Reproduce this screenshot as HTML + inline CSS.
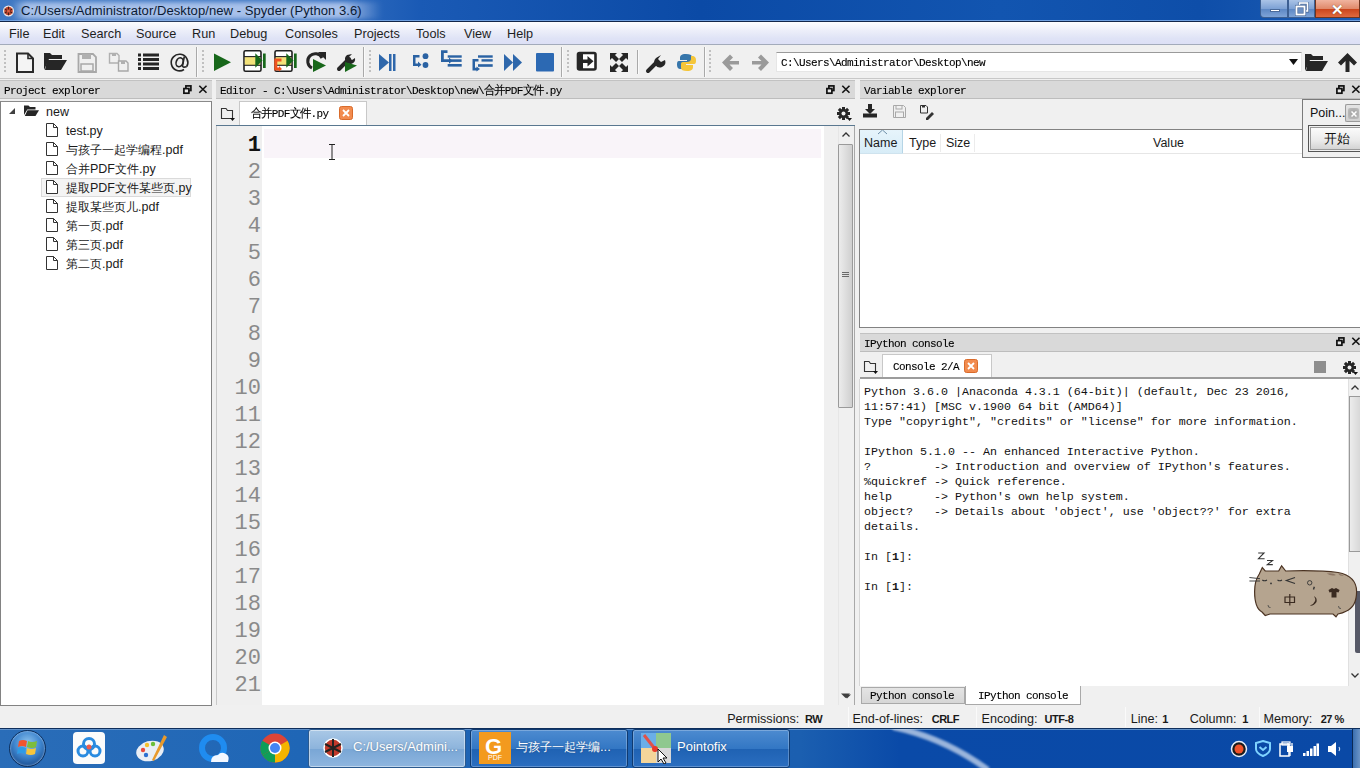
<!DOCTYPE html>
<html><head><meta charset="utf-8">
<style>
*{margin:0;padding:0;box-sizing:border-box}
html,body{line-height:1.15;width:1360px;height:768px;overflow:hidden;background:#f0f0f0;font-family:"Liberation Sans",sans-serif;color:#000}
.a{position:absolute}
.mono{font-family:"Liberation Mono",monospace}
#title{left:0;top:0;width:1360px;height:22px;background:linear-gradient(90deg,#3f78c3 0px,#3a74c2 300px,#1a5ab5 420px,#0b4aa6 700px,#1255b0 1000px,#0e4ea9 1200px,#1d5db4 1360px);border-bottom:1px solid #12264a;box-shadow:inset 0 -1px 0 #6fa0e0}
#title .t{left:21px;top:3px;font-size:13.05px;color:#0b1a33;white-space:nowrap;letter-spacing:0.05px}
#menubar{left:0;top:22px;width:1360px;height:23px;background:linear-gradient(#fdfdfe,#eef0fa 35%,#dfe3f6 75%,#dde0f6);border-bottom:1px solid #a3abbb}
.menu{top:5px;font-size:12.7px;color:#1e1e1e;white-space:nowrap}
#toolbar{left:0;top:45px;width:1360px;height:34px;background:#f0f0f0;border-bottom:1px solid #c8c8c8}
.sep{top:47px;width:2px;height:30px;background:#a9a9a9;border-right:1px solid #fafafa}
.dots{top:50px;width:2px;height:24px;background:repeating-linear-gradient(#c0c0c0 0 2px,transparent 2px 4px)}
.dh{height:19px;background:#d9d9d9;border-top:1px solid #c2c2c2;border-bottom:1px solid #bdbdbd}
.dh .t{left:4px;top:4px;font-family:"Liberation Mono",monospace;font-size:11px;letter-spacing:-0.6px;transform:scaleY(1.05);transform-origin:0 0;color:#111;white-space:nowrap;-webkit-text-stroke:0.12px #000;color:#000}
.sm{font-family:"Liberation Mono",monospace;font-size:11px;letter-spacing:-0.6px;transform:scaleY(1.05);transform-origin:0 0;color:#111;white-space:nowrap;-webkit-text-stroke:0.12px #000;color:#000}

.tr{font-size:12.5px;color:#1a1a1a;white-space:nowrap}
.ln{margin-top:1px;left:216px;width:45px;text-align:right;font-family:"Liberation Mono",monospace;font-size:22px;color:#8a8a8a;line-height:27px;height:27px}
.cl{margin-top:2px;left:864px;font-family:"Liberation Mono",monospace;font-size:11.67px;color:#111;white-space:pre;line-height:15px}
.vh{top:136px;font-size:12.5px;color:#1a1a1a;white-space:nowrap}
.sb{top:711.5px;font-size:12.6px;color:#1a1a1a;white-space:nowrap}
.sbv{top:712.5px;font-size:11px;font-weight:bold;color:#1a1a1a;white-space:nowrap;letter-spacing:-0.5px}

.tk{top:740px;font-size:13px;color:#fff;white-space:nowrap;text-shadow:0 0 2px rgba(0,0,0,.3)}
</style></head><body>
<!-- title bar -->
<div id="title" class="a">
 <div class="a" style="left:12px;top:2px;width:370px;height:17px;background:linear-gradient(90deg,rgba(185,205,240,.0) 0,rgba(185,205,240,.85) 14px,rgba(190,208,242,.85) 330px,rgba(185,205,240,0) 370px);filter:blur(2.5px)"></div>
 <svg class="a" style="left:2px;top:5px" width="13" height="12" viewBox="0 0 13 12"><circle cx="6.5" cy="6" r="5.5" fill="#f4ece8"/><circle cx="6.5" cy="6" r="4.3" fill="#b8402a"/><path d="M6.5 1.7 V10.3 M2.5 4 L10.5 8 M2.5 8 L10.5 4" stroke="#3a1a10" stroke-width="0.9"/><circle cx="6.5" cy="6" r="1.6" fill="#e06040"/></svg>
 <div class="a t">C:/Users/Administrator/Desktop/new - Spyder (Python 3.6)</div>
 <div class="a" style="left:1260px;top:0;width:28px;height:18px;background:linear-gradient(#aac3e6,#7ea2d5 50%,#5b86c3 51%,#7fa4d8);border:1px solid #3c5f92;border-top:none;border-radius:0 0 0 4px"></div>
 <div class="a" style="left:1270px;top:9px;width:10px;height:3px;background:#fff;border:1px solid #4a6a9a"></div>
 <div class="a" style="left:1288px;top:0;width:27px;height:18px;background:linear-gradient(#aac3e6,#7ea2d5 50%,#5b86c3 51%,#7fa4d8);border:1px solid #3c5f92;border-top:none"></div>
 <svg class="a" style="left:1295px;top:2px" width="14" height="14" viewBox="0 0 14 14"><rect x="4.5" y="1" width="8" height="8" fill="none" stroke="#4a6a9a" stroke-width="3.2"/><rect x="4.5" y="1" width="8" height="8" fill="none" stroke="#fff" stroke-width="1.6"/><rect x="1.5" y="4.5" width="8" height="8" fill="#6d90c2" stroke="#4a6a9a" stroke-width="3.2"/><rect x="1.5" y="4.5" width="8" height="8" fill="none" stroke="#fff" stroke-width="1.8"/></svg>
 <div class="a" style="left:1315px;top:0;width:45px;height:18px;background:linear-gradient(#f0b49f,#e08a6b 50%,#c9431a 51%,#df6a3f);border:1px solid #6d3521;border-top:none"></div>
 <div class="a" style="left:1331px;top:1px;font-size:15px;font-weight:bold;color:#fff;text-shadow:0 0 1px #5a2a10">✕</div>
</div>
<!-- menubar -->
<div id="menubar" class="a">
 <div class="a menu" style="left:9px">File</div>
 <div class="a menu" style="left:43px">Edit</div>
 <div class="a menu" style="left:81px">Search</div>
 <div class="a menu" style="left:136px">Source</div>
 <div class="a menu" style="left:192px">Run</div>
 <div class="a menu" style="left:230px">Debug</div>
 <div class="a menu" style="left:285px">Consoles</div>
 <div class="a menu" style="left:354px">Projects</div>
 <div class="a menu" style="left:416px">Tools</div>
 <div class="a menu" style="left:464px">View</div>
 <div class="a menu" style="left:507px">Help</div>
</div>
<!-- toolbar -->
<div id="toolbar" class="a"></div>

<div class="a dots" style="left:4px"></div>
<div class="a dots" style="left:202px"></div>
<div class="a dots" style="left:369px"></div>
<div class="a dots" style="left:567px"></div>
<div class="a dots" style="left:709px"></div>
<div class="a sep" style="left:196px"></div>
<div class="a sep" style="left:363px"></div>
<div class="a sep" style="left:561px"></div>
<div class="a sep" style="left:637px;top:50px;height:24px"></div>
<div class="a sep" style="left:704px"></div>
<svg class="a" style="left:0;top:45px" width="1360" height="34" viewBox="0 45 1360 34">
 <!-- new file -->
 <path d="M17 53.5 H28 L33 58.5 V72 H17 Z" fill="#f4f4f4" stroke="#2a2a2a" stroke-width="2"/>
 <path d="M28 53.5 V58.5 H33" fill="none" stroke="#2a2a2a" stroke-width="1.6"/>
 <!-- open folder -->
 <path d="M44 53 H50 L52 55 H62 V59 H49 L44 70 Z" fill="#262626"/>
 <path d="M47 60 H67 L61 70 H45 Z" fill="#262626"/>
 <!-- save gray -->
 <path d="M78.5 54 H93 L96 57 V72 H78.5 Z" fill="none" stroke="#a8a8a8" stroke-width="1.8"/>
 <rect x="82" y="54" width="9" height="5" fill="#b0b0b0"/>
 <rect x="81" y="64" width="12" height="7" fill="none" stroke="#a8a8a8" stroke-width="1.5"/>
 <!-- save all -->
 <path d="M109.5 53.5 H117 L119 55.5 V63 H109.5 Z" fill="none" stroke="#b0b0b0" stroke-width="1.4"/>
 <path d="M118.5 61 H126 L128 63 V71 H118.5 Z" fill="#f0f0f0" stroke="#a8a8a8" stroke-width="1.4"/>
 <rect x="112" y="53" width="4" height="3" fill="#b0b0b0"/><rect x="121" y="61" width="4" height="3" fill="#b0b0b0"/>
 <!-- list -->
 <g fill="#262626"><rect x="138" y="53.5" width="3" height="3"/><rect x="143" y="53.5" width="16" height="3"/>
 <rect x="138" y="58" width="3" height="3"/><rect x="143" y="58" width="16" height="3"/>
 <rect x="138" y="62.5" width="3" height="3"/><rect x="143" y="62.5" width="16" height="3"/>
 <rect x="138" y="67" width="3" height="3"/><rect x="143" y="67" width="16" height="3"/></g>
 <path d="M186.8 66.5 A8.3 8.3 0 1 0 184 69.5" fill="none" stroke="#262626" stroke-width="1.6"/><ellipse cx="179.6" cy="62.3" rx="3.4" ry="4.6" transform="rotate(20 179.6 62.3)" fill="none" stroke="#262626" stroke-width="1.6"/><path d="M184.3 56.5 L182.5 66 Q182.8 68 186.8 66.5" fill="none" stroke="#262626" stroke-width="1.6"/>
 <!-- run -->
 <path d="M214 53.5 L231 62.2 L214 71 Z" fill="#17671a"/>
 <!-- run cell -->
 <rect x="244" y="50.8" width="17" height="20.5" rx="1.5" fill="#fff" stroke="#1f1f1f" stroke-width="1.6"/>
 <rect x="244.8" y="57" width="15.4" height="8" fill="#f3e27a"/>
 <line x1="244" y1="56.6" x2="261" y2="56.6" stroke="#1f1f1f" stroke-width="1.1"/><line x1="244" y1="65.3" x2="261" y2="65.3" stroke="#1f1f1f" stroke-width="1.1"/>
 <path d="M255.3 53.3 L262.5 60.5 L255.3 67.8 Z" fill="#17671a"/><rect x="263" y="53.5" width="2.7" height="14.5" fill="#17671a"/>
 <!-- run cell advance -->
 <rect x="275" y="50.8" width="17" height="20.5" rx="1.5" fill="#fff" stroke="#1f1f1f" stroke-width="1.6"/>
 <rect x="275.8" y="57" width="15.4" height="8" fill="#f3e27a"/>
 <line x1="275" y1="56.6" x2="292" y2="56.6" stroke="#1f1f1f" stroke-width="1.1"/><line x1="275" y1="65.3" x2="292" y2="65.3" stroke="#1f1f1f" stroke-width="1.1"/>
 <path d="M274.3 58.5 H281.5 V61.5 H277.3 V67.5 H279 V66 L282 69 L279 71.5 V70.5 H274.3 Z" fill="#f0521e"/>
 <path d="M286.3 53.3 L293.5 60.5 L286.3 67.8 Z" fill="#17671a"/><rect x="294" y="53.5" width="2.7" height="14.5" fill="#17671a"/>
 <!-- rerun -->
 <path d="M322 58 A7.5 7.5 0 1 0 312 68" fill="none" stroke="#262626" stroke-width="3"/>
 <path d="M318 52 L326 52 L326 60 Z" fill="#262626"/>
 <path d="M313 59 L326 65.5 L313 72 Z" fill="#17671a"/>
 <!-- run selection -->
 <path d="M339 69 L349 59" stroke="#262626" stroke-width="4" stroke-linecap="round"/>
 <path d="M347 55 A5 5 0 1 0 355 58 L352 60 L349 57 L352 54 Z" fill="#262626"/>
 <path d="M345 62 L357 65.5 L345 72 Z" fill="#17671a"/>
 <!-- debug -->
 <path d="M379 54 L389 62.5 L379 71 Z" fill="#2e67ab"/><rect x="389" y="54" width="2.5" height="17" fill="#2e67ab"/><rect x="393" y="54" width="2.5" height="17" fill="#2e67ab"/>
 <!-- step -->
 <g fill="#2a62a3"><path d="M413 55 H419.5 V57.5 H415.5 V63.5 H418 V61.5 L421.5 64.7 L418 67.5 V66 H413 Z"/><circle cx="425.5" cy="56.2" r="2.9"/><circle cx="425.5" cy="65" r="2.9"/></g>
 <!-- step into -->
 <g fill="#2a62a3"><path d="M441 50.3 H447.5 V53 H443.8 V59.3 H449 V57.5 L452.5 60.7 L449 63.8 V62 H441 Z"/><rect x="447.7" y="55.3" width="14" height="2.4"/><rect x="450.4" y="59.3" width="11.2" height="2.6"/><rect x="447.7" y="64" width="14" height="2.6"/></g>
 <!-- step return -->
 <g fill="#2a62a3"><rect x="478" y="55.3" width="14.7" height="2.4"/><rect x="481.5" y="59.2" width="11.2" height="2.4"/><rect x="478" y="64.2" width="14.7" height="2.6"/><path d="M472.5 59 H478.5 V61.5 H475 V67.8 H476.5 V66.5 L480 69 L476.5 71.5 V70.5 H472.5 Z"/></g>
 <!-- continue -->
 <g fill="#2e67ab"><path d="M504 54 L513 62.5 L504 71 Z"/><path d="M513 54 L522 62.5 L513 71 Z"/></g>
 <!-- stop -->
 <rect x="536" y="53" width="18" height="18.5" rx="1" fill="#2c69b3"/>
 <!-- maximize pane -->
 <rect x="578" y="53" width="17.5" height="16.5" rx="1.5" fill="#fff" stroke="#262626" stroke-width="2.6"/>
 <rect x="578" y="53" width="5" height="16.5" fill="#262626"/>
 <path d="M583 59.5 H587.5 V56 L593.5 61.2 L587.5 66.5 V63 H583 Z" fill="#262626"/>
 <!-- fullscreen -->
 <g fill="#262626"><path d="M610 53 H617 L615 55 L619 59 L616 62 L612 58 L610 60 Z"/><path d="M628 53 H621 L623 55 L619 59 L622 62 L626 58 L628 60 Z"/><path d="M610 72 H617 L615 70 L619 66 L616 63 L612 67 L610 65 Z"/><path d="M628 72 H621 L623 70 L619 66 L622 63 L626 67 L628 65 Z"/></g>
 <!-- wrench -->
 <path d="M648 71 L657 62" stroke="#262626" stroke-width="4" stroke-linecap="round"/>
 <path d="M656 58 A5.5 5.5 0 1 0 665 60 L661 62 L658 59 L661 55 Z" fill="#262626"/>
 <!-- python -->
 <path d="M686 54 C681 54 680 56 680 58 V60 H687 V61 H679 C677 61 677 63 677 65 C677 68 679 69 680 69 H682 V66 C682 64 684 63 686 63 H690 C692 63 692 62 692 60 V57 C692 55 690 54 686 54 Z" fill="#3776ab"/>
 <path d="M687 71 C692 71 693 69 693 67 V65 H686 V64 H694 C696 64 696 62 696 60 C696 57 694 56 693 56 H691 V59 C691 61 689 62 687 62 H683 C681 62 681 63 681 65 V68 C681 70 683 71 687 71 Z" fill="#f5c63a"/>
 <!-- back / forward -->
 <path d="M722 62.5 L730 54.5 L733 57.5 L729.5 61 H739 V64.5 H729.5 L733 68 L730 71 Z" fill="#9a9a9a"/>
 <path d="M769 62.5 L761 54.5 L758 57.5 L761.5 61 H752 V64.5 H761.5 L758 68 L761 71 Z" fill="#9a9a9a"/>
 <!-- right folder -->
 <path d="M1305 54 H1311 L1313 56 H1323 V60 H1310 L1305 71 Z" fill="#262626"/>
 <path d="M1308 61 H1328 L1322 71 H1306 Z" fill="#262626"/>
 <!-- up arrow -->
 <path d="M1347.5 53 L1357 62.5 L1354 65.5 L1349.5 61 V72 H1345.5 V61 L1341 65.5 L1338 62.5 Z" fill="#262626"/>
</svg>
<div class="a" style="left:776px;top:52px;width:526px;height:20px;background:#fff;border:1px solid #e6e6e6;border-top:1.5px solid #9a9a9a"></div>
<div class="a sm" style="left:781px;top:57px">C:\Users\Administrator\Desktop\new</div>
<svg class="a" style="left:1289px;top:59px" width="10" height="6"><path d="M0 0 H9 L4.5 6 Z" fill="#111"/></svg>


<!-- ===== Project explorer ===== -->
<div class="a dh" style="left:0;top:80px;width:212px"><div class="a t">Project explorer</div></div>
<svg class="a" style="left:183px;top:85px" width="26" height="10" viewBox="0 0 26 10">
 <rect x="2.9" y="0.9" width="5" height="4.6" fill="none" stroke="#111" stroke-width="1.7"/>
 <rect x="0.9" y="3.6" width="5" height="4.6" fill="#e8e8e8" stroke="#111" stroke-width="1.7"/>
 <path d="M16.3 0.8 L23.5 7.8 M23.5 0.8 L16.3 7.8" stroke="#111" stroke-width="1.6"/>
</svg>
<div class="a" style="left:0;top:101px;width:212px;height:605px;background:#fff;border:1px solid #828282;border-top:1px solid #8a8a8a"></div>
<svg class="a" style="left:9px;top:108px" width="7" height="7"><path d="M6 0 V6 H0 Z" fill="#404040"/></svg>
<svg class="a" style="left:24px;top:105px" width="15" height="11" viewBox="0 0 15 11"><path d="M0 0.5 H4.5 L6 2 H11.5 V4.5 H3.3 L0 10 Z" fill="#262626"/><path d="M3.5 5.2 H15 L11.5 11 H0.8 Z" fill="#262626"/></svg>
<div class="a tr" style="left:46px;top:104.5px">new</div>
<div class="a" style="left:41px;top:178px;width:150px;height:19px;background:#f4f4f4;border:1px solid #dadada"></div>
<svg class="a" style="left:45px;top:123px" width="14" height="14" viewBox="0 0 14 14"><path d="M1.5 0.5 H8.5 L12.5 4.5 V13.5 H1.5 Z" fill="#fff" stroke="#333" stroke-width="1"/><path d="M8.5 0.5 V4.5 H12.5" fill="none" stroke="#333" stroke-width="1"/></svg><div class="a tr" style="left:66px;top:123.5px">test.py</div><svg class="a" style="left:45px;top:142px" width="14" height="14" viewBox="0 0 14 14"><path d="M1.5 0.5 H8.5 L12.5 4.5 V13.5 H1.5 Z" fill="#fff" stroke="#333" stroke-width="1"/><path d="M8.5 0.5 V4.5 H12.5" fill="none" stroke="#333" stroke-width="1"/></svg><div class="a tr" style="left:66px;top:142.5px"><span style="font-size:12px">与孩子一起学编程</span>.pdf</div><svg class="a" style="left:45px;top:161px" width="14" height="14" viewBox="0 0 14 14"><path d="M1.5 0.5 H8.5 L12.5 4.5 V13.5 H1.5 Z" fill="#fff" stroke="#333" stroke-width="1"/><path d="M8.5 0.5 V4.5 H12.5" fill="none" stroke="#333" stroke-width="1"/></svg><div class="a tr" style="left:66px;top:161.5px"><span style="font-size:12px">合并</span>PDF<span style="font-size:12px">文件</span>.py</div><svg class="a" style="left:45px;top:180px" width="14" height="14" viewBox="0 0 14 14"><path d="M1.5 0.5 H8.5 L12.5 4.5 V13.5 H1.5 Z" fill="#fff" stroke="#333" stroke-width="1"/><path d="M8.5 0.5 V4.5 H12.5" fill="none" stroke="#333" stroke-width="1"/></svg><div class="a tr" style="left:66px;top:180.5px"><span style="font-size:12px">提取</span>PDF<span style="font-size:12px">文件某些页</span>.py</div><svg class="a" style="left:45px;top:199px" width="14" height="14" viewBox="0 0 14 14"><path d="M1.5 0.5 H8.5 L12.5 4.5 V13.5 H1.5 Z" fill="#fff" stroke="#333" stroke-width="1"/><path d="M8.5 0.5 V4.5 H12.5" fill="none" stroke="#333" stroke-width="1"/></svg><div class="a tr" style="left:66px;top:199.5px"><span style="font-size:12px">提取某些页儿</span>.pdf</div><svg class="a" style="left:45px;top:218px" width="14" height="14" viewBox="0 0 14 14"><path d="M1.5 0.5 H8.5 L12.5 4.5 V13.5 H1.5 Z" fill="#fff" stroke="#333" stroke-width="1"/><path d="M8.5 0.5 V4.5 H12.5" fill="none" stroke="#333" stroke-width="1"/></svg><div class="a tr" style="left:66px;top:218.5px"><span style="font-size:12px">第一页</span>.pdf</div><svg class="a" style="left:45px;top:237px" width="14" height="14" viewBox="0 0 14 14"><path d="M1.5 0.5 H8.5 L12.5 4.5 V13.5 H1.5 Z" fill="#fff" stroke="#333" stroke-width="1"/><path d="M8.5 0.5 V4.5 H12.5" fill="none" stroke="#333" stroke-width="1"/></svg><div class="a tr" style="left:66px;top:237.5px"><span style="font-size:12px">第三页</span>.pdf</div><svg class="a" style="left:45px;top:256px" width="14" height="14" viewBox="0 0 14 14"><path d="M1.5 0.5 H8.5 L12.5 4.5 V13.5 H1.5 Z" fill="#fff" stroke="#333" stroke-width="1"/><path d="M8.5 0.5 V4.5 H12.5" fill="none" stroke="#333" stroke-width="1"/></svg><div class="a tr" style="left:66px;top:256.5px"><span style="font-size:12px">第二页</span>.pdf</div>

<!-- ===== Editor ===== -->
<div class="a dh" style="left:216px;top:80px;width:639px"><div class="a t">Editor - C:\Users\Administrator\Desktop\new\合并PDF文件.py</div></div>
<svg class="a" style="left:826px;top:85px" width="26" height="10" viewBox="0 0 26 10">
 <rect x="2.9" y="0.9" width="5" height="4.6" fill="none" stroke="#111" stroke-width="1.7"/>
 <rect x="0.9" y="3.6" width="5" height="4.6" fill="#e8e8e8" stroke="#111" stroke-width="1.7"/>
 <path d="M16.3 0.8 L23.5 7.8 M23.5 0.8 L16.3 7.8" stroke="#111" stroke-width="1.6"/>
</svg>
<svg class="a" style="left:220px;top:106px" width="16" height="16" viewBox="0 0 16 16"><path d="M1.5 2.5 H6 L7.5 4.5 H12.5 V12.5 H1.5 Z" fill="none" stroke="#333" stroke-width="1.1"/><path d="M10 12 H15 L12.5 15 Z" fill="#111"/></svg>
<div class="a" style="left:239px;top:101px;width:128px;height:25px;background:#fff;border:1px solid #c8c8c8;border-bottom:none"></div>
<div class="a sm" style="left:251px;top:108px">合并PDF文件.py</div>
<svg class="a" style="left:339px;top:106px" width="14" height="14" viewBox="0 0 14 14"><rect x="0.5" y="0.5" width="13" height="13" rx="2" fill="#f28b4e" stroke="#d96b2b"/><path d="M4 4 L10 10 M10 4 L4 10" stroke="#fff" stroke-width="1.8"/></svg>
<svg class="a" style="left:837px;top:107px" width="15" height="14" viewBox="0 0 15 14">
 <g fill="#262626"><circle cx="6.5" cy="6.5" r="4.5"/>
 <rect x="5" y="0" width="3" height="13"/><rect x="0" y="5" width="13" height="3"/>
 <rect x="5" y="0" width="3" height="13" transform="rotate(45 6.5 6.5)"/><rect x="5" y="0" width="3" height="13" transform="rotate(-45 6.5 6.5)"/></g>
 <circle cx="6.5" cy="6.5" r="2" fill="#f0f0f0"/>
 <path d="M10 11 H15 L12.5 14 Z" fill="#111"/>
</svg>
<div class="a" style="left:216px;top:124.5px;width:639px;height:1.5px;background:#5a7890"></div>
<div class="a" style="left:216px;top:126px;width:639px;height:579px;background:#fff;border-left:1px solid #c9c9c9"></div>
<div class="a" style="left:217px;top:126px;width:45px;height:579px;background:#efefef"></div>
<div class="a" style="left:264px;top:129px;width:557px;height:29px;background:#f9f4f9"></div>
<div class="a ln" style="top:131px;color:#111;font-weight:bold">1</div><div class="a ln" style="top:158px;">2</div><div class="a ln" style="top:185px;">3</div><div class="a ln" style="top:212px;">4</div><div class="a ln" style="top:239px;">5</div><div class="a ln" style="top:266px;">6</div><div class="a ln" style="top:293px;">7</div><div class="a ln" style="top:320px;">8</div><div class="a ln" style="top:347px;">9</div><div class="a ln" style="top:374px;">10</div><div class="a ln" style="top:401px;">11</div><div class="a ln" style="top:428px;">12</div><div class="a ln" style="top:455px;">13</div><div class="a ln" style="top:482px;">14</div><div class="a ln" style="top:509px;">15</div><div class="a ln" style="top:536px;">16</div><div class="a ln" style="top:563px;">17</div><div class="a ln" style="top:590px;">18</div><div class="a ln" style="top:617px;">19</div><div class="a ln" style="top:644px;">20</div><div class="a ln" style="top:671px;">21</div>
<!-- I-beam cursor -->
<svg class="a" style="left:328px;top:144px" width="8" height="16"><path d="M1 0.5 H7 M4 0.5 V15.5 M1 15.5 H7" stroke="#222" stroke-width="1"/></svg>
<!-- editor scrollbar -->
<div class="a" style="left:824px;top:126px;width:31px;height:579px;background:#f0f0f0;border-right:1px solid #a8a8a8"></div><div class="a" style="left:838px;top:126px;width:1px;height:579px;background:#e6e6e6"></div>
<svg class="a" style="left:842px;top:132px" width="8" height="5"><path d="M0.5 4.5 L4 1 L7.5 4.5" fill="none" stroke="#333" stroke-width="1.3"/></svg>
<div class="a" style="left:838px;top:144px;width:15px;height:264px;background:linear-gradient(90deg,#ececec,#dedede 50%,#cfcfcf);border:1px solid #9a9a9a;border-radius:1px"></div>
<div class="a" style="left:842px;top:272px;width:7px;height:6px;background:repeating-linear-gradient(#6a6a6a 0 1px,transparent 1px 2px)"></div>
<svg class="a" style="left:841px;top:693px" width="9" height="6"><path d="M0 0.5 L4.5 5 L9 0.5 Z" fill="#404040"/></svg>

<!-- ===== Variable explorer ===== -->
<div class="a dh" style="left:860px;top:80px;width:500px"><div class="a t">Variable explorer</div></div>
<svg class="a" style="left:1336px;top:85px" width="26" height="10" viewBox="0 0 26 10">
 <rect x="2.9" y="0.9" width="5" height="4.6" fill="none" stroke="#111" stroke-width="1.7"/>
 <rect x="0.9" y="3.6" width="5" height="4.6" fill="#e8e8e8" stroke="#111" stroke-width="1.7"/>
 <path d="M16.3 0.8 L23.5 7.8 M23.5 0.8 L16.3 7.8" stroke="#111" stroke-width="1.6"/>
</svg>
<svg class="a" style="left:863px;top:104px" width="14" height="14" viewBox="0 0 14 14"><path d="M5 0 H9 V5 H12 L7 10 L2 5 H5 Z" fill="#262626"/><rect x="0" y="9.5" width="14" height="4" fill="#262626"/></svg>
<svg class="a" style="left:893px;top:105px" width="13" height="13" viewBox="0 0 13 13"><path d="M0.5 0.5 H10.5 L12.5 2.5 V12.5 H0.5 Z" fill="none" stroke="#a8a8a8"/><rect x="3" y="0.5" width="6" height="3.5" fill="none" stroke="#a8a8a8"/><rect x="2.5" y="7" width="8" height="5.5" fill="none" stroke="#a8a8a8"/></svg>
<svg class="a" style="left:920px;top:105px" width="15" height="15" viewBox="0 0 15 15"><path d="M0.5 0.5 H6 L7.5 2 V8 H0.5 Z" fill="none" stroke="#333"/><rect x="2" y="0.5" width="3" height="2" fill="#333"/><path d="M6 13 L12 7 L14 9 L8 15 H6 Z" fill="#333"/></svg>
<div class="a" style="left:859px;top:129px;width:501px;height:199px;background:#fff;border:1px solid #828282;border-right:none"></div>
<div class="a" style="left:860px;top:130px;width:43px;height:24px;background:linear-gradient(#e6f4fb,#d7ecf7);border-right:1px solid #b6d5e6"></div>
<div class="a" style="left:903px;top:130px;width:457px;height:24px;background:#fff;border-bottom:1px solid #e6e6e6"></div>
<div class="a" style="left:860px;top:153px;width:43px;height:1px;background:#cfe3ee"></div>
<div class="a" style="left:940px;top:134px;width:1px;height:18px;background:#ececec"></div>
<div class="a" style="left:974px;top:134px;width:1px;height:18px;background:#ececec"></div>
<svg class="a" style="left:878px;top:130px" width="9" height="5"><path d="M0 4 L4.5 0 L9 4" fill="none" stroke="#6f8fa8"/></svg>
<div class="a vh" style="left:864px">Name</div>
<div class="a vh" style="left:909px">Type</div>
<div class="a vh" style="left:946px">Size</div>
<div class="a vh" style="left:1153px">Value</div>
<!-- Pointofix widget -->
<div class="a" style="left:1302px;top:99px;width:58px;height:59px;background:#f0f0f0;border:1px solid #7a7a7a;border-right:none"></div>
<div class="a" style="left:1310px;top:106px;font-size:12.5px;color:#111;white-space:nowrap">Poin...</div>
<div class="a" style="left:1345px;top:104px;width:15px;height:18px;background:linear-gradient(#e4e4e4,#d0d0d0);border:1px solid #9a9a9a;border-right:none;border-radius:2px 0 0 2px"></div>
<div class="a" style="left:1348px;top:108px;width:11px;height:11px;border-radius:2px;background:radial-gradient(#a0a0a0,#c0c0c0)"></div><svg class="a" style="left:1351px;top:111px" width="6" height="6"><path d="M0.5 0.5 L5.5 5.5 M5.5 0.5 L0.5 5.5" stroke="#fff" stroke-width="1.5"/></svg>
<div class="a" style="left:1308px;top:125px;width:52px;height:27px;border:1px solid #555;border-right:none;background:#f0f0f0"></div>
<div class="a" style="left:1310px;top:127px;width:50px;height:23px;background:linear-gradient(#fbfbfb,#eaeaea 60%,#d4d4d4);border:1px solid #9a9a9a;border-right:none"></div>
<div class="a" style="left:1324px;top:132px;font-size:13px;color:#111;white-space:nowrap">开始</div>

<!-- ===== IPython console ===== -->
<div class="a dh" style="left:860px;top:333px;width:500px"><div class="a t">IPython console</div></div>
<svg class="a" style="left:1336px;top:337px" width="26" height="10" viewBox="0 0 26 10">
 <rect x="2.9" y="0.9" width="5" height="4.6" fill="none" stroke="#111" stroke-width="1.7"/>
 <rect x="0.9" y="3.6" width="5" height="4.6" fill="#e8e8e8" stroke="#111" stroke-width="1.7"/>
 <path d="M16.3 0.8 L23.5 7.8 M23.5 0.8 L16.3 7.8" stroke="#111" stroke-width="1.6"/>
</svg>
<svg class="a" style="left:863px;top:359px" width="16" height="16" viewBox="0 0 16 16"><path d="M1.5 2.5 H6 L7.5 4.5 H12.5 V12.5 H1.5 Z" fill="none" stroke="#333" stroke-width="1.1"/><path d="M10 12 H15 L12.5 15 Z" fill="#111"/></svg>
<div class="a" style="left:882px;top:354px;width:110px;height:25px;background:#fff;border:1px solid #c8c8c8;border-bottom:none"></div>
<div class="a sm" style="left:893px;top:361px">Console 2/A</div>
<svg class="a" style="left:964px;top:359px" width="14" height="14" viewBox="0 0 14 14"><rect x="0.5" y="0.5" width="13" height="13" rx="2" fill="#f28b4e" stroke="#d96b2b"/><path d="M4 4 L10 10 M10 4 L4 10" stroke="#fff" stroke-width="1.8"/></svg>
<div class="a" style="left:1314px;top:361px;width:12px;height:12px;background:#8e8e8e"></div>
<svg class="a" style="left:1343px;top:361px" width="15" height="14" viewBox="0 0 15 14">
 <g fill="#262626"><circle cx="6.5" cy="6.5" r="4.5"/>
 <rect x="5" y="0" width="3" height="13"/><rect x="0" y="5" width="13" height="3"/>
 <rect x="5" y="0" width="3" height="13" transform="rotate(45 6.5 6.5)"/><rect x="5" y="0" width="3" height="13" transform="rotate(-45 6.5 6.5)"/></g>
 <circle cx="6.5" cy="6.5" r="2" fill="#f0f0f0"/>
 <path d="M10 11 H15 L12.5 14 Z" fill="#111"/>
</svg>
<div class="a" style="left:860px;top:377px;width:500px;height:1.5px;background:#9c9c9c"></div>
<div class="a" style="left:859px;top:379px;width:501px;height:307px;background:#fff;border-left:1px solid #d6d6d6"></div>
<div class="a cl" style="top:383px">Python 3.6.0 |Anaconda 4.3.1 (64-bit)| (default, Dec 23 2016,</div><div class="a cl" style="top:398px">11:57:41) [MSC v.1900 64 bit (AMD64)]</div><div class="a cl" style="top:413px">Type &quot;copyright&quot;, &quot;credits&quot; or &quot;license&quot; for more information.</div><div class="a cl" style="top:428px"></div><div class="a cl" style="top:443px">IPython 5.1.0 -- An enhanced Interactive Python.</div><div class="a cl" style="top:458px">?         -&gt; Introduction and overview of IPython&#x27;s features.</div><div class="a cl" style="top:473px">%quickref -&gt; Quick reference.</div><div class="a cl" style="top:488px">help      -&gt; Python&#x27;s own help system.</div><div class="a cl" style="top:503px">object?   -&gt; Details about &#x27;object&#x27;, use &#x27;object??&#x27; for extra</div><div class="a cl" style="top:518px">details.</div><div class="a cl" style="top:533px"></div><div class="a cl" style="top:548px"><span style="color:#1a1a1a">In [</span><b style="color:#1a1a1a">1</b><span style="color:#1a1a1a">]: </span></div><div class="a cl" style="top:563px"></div><div class="a cl" style="top:578px"><span style="color:#1a1a1a">In [</span><b style="color:#1a1a1a">1</b><span style="color:#1a1a1a">]: </span></div>
<!-- console scrollbar -->
<div class="a" style="left:1348px;top:379px;width:12px;height:307px;background:#f0f0f0;border-left:1px solid #e0e0e0"></div>
<svg class="a" style="left:1351px;top:385px" width="8" height="5"><path d="M0.5 4.5 L4 1 L7.5 4.5" fill="none" stroke="#333" stroke-width="1.3"/></svg>
<div class="a" style="left:1349px;top:396px;width:11px;height:156px;background:linear-gradient(90deg,#ececec,#d8d8d8);border:1px solid #9a9a9a;border-right:none"></div>
<svg class="a" style="left:1351px;top:673px" width="8" height="5"><path d="M0.5 0.5 L4 4 L7.5 0.5" fill="none" stroke="#333" stroke-width="1.3"/></svg>

<!-- pusheen -->
<div class="a" style="left:1355px;top:591px;width:5px;height:62px;background:#565866;border-radius:2px 0 0 2px"></div>
<svg class="a" style="left:1248px;top:550px" width="112" height="68" viewBox="0 0 112 68">
 <path d="M6.6 41.6 C6.6 33 8.5 28 11.3 24 L14.3 17.5 L17.2 21 L30.7 21 L33.6 15.8 L37.7 21 C55 20.5 75 20.5 90 22.5 C103 25 108.6 32 108.6 41.6 C108.6 52 104 59 97.5 61.5 C95 63 91 63.8 90 64 L88 66.8 L85 64 L22 64 L17.2 65.5 L14 62 C10 60 6.6 53 6.6 41.6 Z" fill="#b5a48f" stroke="#4b3322" stroke-width="1.2"/>
 <path d="M78.7 23.5 Q85 22.5 88 25 Q83 26.5 78.7 23.5 Z M90 23.5 Q94 24 96 26 Q92 26.5 90 23.5 Z" fill="#8b7565"/>
 <path d="M10.2 3 H16 L10.5 8.7 H16.6 M19 10.5 H24.5 L19.3 14.6 H24.8" fill="none" stroke="#333" stroke-width="1.1"/>
 <path d="M1.4 27.5 L12 28.7 M1.4 31 H12" stroke="#333" stroke-width="0.9"/>
 <path d="M14.3 30 Q16.5 31.5 19 30 M29.5 30 Q31.7 31.5 34 30 M47 27.5 L38.3 30.4 L47 33.4" fill="none" stroke="#333" stroke-width="1.1"/>
 <circle cx="23" cy="33.4" r="0.9" fill="#333"/>
 <circle cx="61.7" cy="32.8" r="2.2" fill="none" stroke="#333" stroke-width="0.9"/>
 <path d="M66.3 36.8 L65.5 39.5" stroke="#333" stroke-width="1.4"/>
 <path d="M37 47 H46.5 V52.5 H37 Z M41.8 44 V55.6" fill="none" stroke="#3a2a20" stroke-width="1.2"/>
 <path d="M66 46 Q70 52 62 55.6 Q66 56 68.5 52 Q69.5 48 66 46 Z" fill="#3a2a20"/>
 <path d="M80.5 40 L84 38 L86 39 L88 38 L91.6 40 L90.5 42.5 L88.5 42 L88.5 47.4 L83.5 47.4 L83.5 42 L81.5 42.5 Z" fill="#3a2a20"/>
 <path d="M20 55 Q20 58 22.5 57.5 M90.5 56 Q90.5 59 93 58.5" fill="none" stroke="#444" stroke-width="0.8"/>
</svg>
<!-- bottom tabs -->
<div class="a" style="left:860px;top:686px;width:500px;height:19px;background:#f0f0f0"></div>
<div class="a" style="left:861px;top:687px;width:104px;height:17px;background:linear-gradient(#e4e4e4,#d6d6d6);border:1px solid #a9a9a9"></div>
<div class="a sm" style="left:870px;top:690px">Python console</div>
<div class="a" style="left:965px;top:686px;width:116px;height:19px;background:#fff;border:1px solid #a9a9a9;border-top:none"></div>
<div class="a sm" style="left:978px;top:690px">IPython console</div>
<svg class="a" style="left:843px;top:694px" width="8" height="5"><path d="M0 0.5 L4 4.5 L8 0.5 Z" fill="#404040"/></svg>

<!-- ===== Status bar ===== -->
<div class="a sb" style="left:727.2px">Permissions:</div><div class="a sbv" style="left:805px">RW</div>
<div class="a sb" style="left:852.4px">End-of-lines:</div><div class="a sbv" style="left:931.7px">CRLF</div>
<div class="a sb" style="left:981.5px">Encoding:</div><div class="a sbv" style="left:1044.6px">UTF-8</div>
<div class="a sb" style="left:1130.7px">Line:</div><div class="a sbv" style="left:1162.2px">1</div>
<div class="a sb" style="left:1189.7px">Column:</div><div class="a sbv" style="left:1242.3px">1</div>
<div class="a sb" style="left:1263.4px">Memory:</div><div class="a sbv" style="left:1320.7px">27 %</div>
<div class="a" style="left:848px;top:707px;width:1px;height:20px;background:#dadada;border-right:1px solid #fafafa"></div>
<div class="a" style="left:976px;top:707px;width:1px;height:20px;background:#dadada;border-right:1px solid #fafafa"></div>
<div class="a" style="left:1125px;top:707px;width:1px;height:20px;background:#dadada;border-right:1px solid #fafafa"></div>
<div class="a" style="left:1259px;top:707px;width:1px;height:20px;background:#dadada;border-right:1px solid #fafafa"></div>
<!-- ===== Taskbar ===== -->
<div class="a" style="left:0;top:728px;width:1360px;height:40px;background:linear-gradient(90deg,#2a6db8 0,#1f66b6 300px,#1b5fb0 800px,#0a4aa8 900px,#0a49a6 1360px);border-top:1px solid #0f2f5c"></div>
<div class="a" style="left:0;top:729px;width:1360px;height:1px;background:#5f90c9"></div>
<!-- swoosh -->
<svg class="a" style="left:860px;top:729px" width="160" height="39" viewBox="860 729 160 39"><path d="M893 727 Q945 738 988 770" fill="none" stroke="rgba(190,208,232,.8)" stroke-width="6" style="filter:blur(1px)"/></svg>
<!-- start orb -->
<div class="a" style="left:9px;top:730px;width:37px;height:37px;border-radius:50%;background:radial-gradient(circle at 50% 35%,#8fc4ee 0,#3f86cf 45%,#1b4f92 80%);border:1px solid #0d2f5c;box-shadow:inset 0 0 2px #cfe6ff"></div>
<svg class="a" style="left:17px;top:737px" width="22" height="22" viewBox="0 0 22 22">
 <path d="M2 4 Q6 2 10 4 L9 10 Q5 8 1 10 Z" fill="#f2542d"/>
 <path d="M11 4 Q15 6 20 4 L19 10 Q15 12 10 10 Z" fill="#7dbd3c"/>
 <path d="M1 11 Q5 9 9 11 L8 17 Q4 15 0 17 Z" fill="#2e9be6"/>
 <path d="M10 11 Q14 13 19 11 L18 17 Q14 19 9 17 Z" fill="#f7c53b"/>
</svg>
<!-- baidu -->
<div class="a" style="left:73px;top:732px;width:32px;height:32px;border-radius:4px;background:#fbfbfb"></div>
<svg class="a" style="left:75px;top:735px" width="28" height="26" viewBox="0 0 28 26">
 <circle cx="14" cy="9" r="5.5" fill="none" stroke="#2a8be0" stroke-width="3"/>
 <circle cx="8" cy="16" r="5" fill="none" stroke="#2a8be0" stroke-width="3"/>
 <circle cx="20" cy="16" r="5" fill="none" stroke="#2a8be0" stroke-width="3"/>
 <circle cx="14" cy="12" r="2.5" fill="#f05a4a"/>
</svg>
<!-- paint -->
<svg class="a" style="left:134px;top:733px" width="34" height="32" viewBox="0 0 34 32">
 <ellipse cx="16" cy="18" rx="14" ry="10" fill="#e9eef5" transform="rotate(-15 16 18)"/>
 <circle cx="9" cy="17" r="2.2" fill="#e94b3c"/><circle cx="13" cy="12" r="2.2" fill="#f4c12c"/><circle cx="19" cy="11" r="2.2" fill="#6bbf3a"/><circle cx="12" cy="22" r="2.2" fill="#2a6fd0"/>
 <path d="M30 2 L33 4 L20 28 L18 27 Z" fill="#e89a2c"/>
</svg>
<!-- qq browser -->
<svg class="a" style="left:197px;top:732px" width="34" height="34" viewBox="0 0 34 34">
 <circle cx="16" cy="16" r="11" fill="none" stroke="#1f8cf0" stroke-width="6"/>
 <path d="M14 30 Q14 23 21 23 Q24 19 29 22 Q33 24 31 30 Z" fill="#f4f8ff"/>
</svg>
<!-- chrome -->
<svg class="a" style="left:259px;top:732px" width="32" height="32" viewBox="0 0 32 32">
 <circle cx="16" cy="16" r="14.5" fill="#db4437"/>
 <path d="M16 16 L3.4 23.3 A14.5 14.5 0 0 0 16 30.5 Z" fill="#0f9d58"/>
 <path d="M16 16 L3.4 8.7 A14.5 14.5 0 0 0 3.4 23.3 Z" fill="#0f9d58"/>
 <path d="M16 16 L28.6 8.7 A14.5 14.5 0 0 1 16 30.5 Z" fill="#f4b400"/>
 <circle cx="16" cy="16" r="6.5" fill="#fff"/><circle cx="16" cy="16" r="5" fill="#4285f4"/>
</svg>
<!-- task buttons -->
<div class="a" style="left:308px;top:729px;width:158px;height:39px;border-radius:3px;background:linear-gradient(#a9c8e6,#8db4dc 50%,#79a6d5 51%,#8fb6df);border:1px solid #2b5a8f;box-shadow:inset 0 0 0 1px rgba(255,255,255,.45)"></div>
<svg class="a" style="left:322px;top:737px" width="22" height="22" viewBox="0 0 22 22"><circle cx="11" cy="11" r="9" fill="#c0392b" stroke="#fff" stroke-width="1.5"/><path d="M11 2 L11 20 M3 7 L19 15 M3 15 L19 7" stroke="#222" stroke-width="2"/></svg>
<div class="a tk" style="left:353px">C:/Users/Admini...</div>
<div class="a" style="left:470px;top:729px;width:158px;height:39px;border-radius:3px;background:linear-gradient(#4d8bd0,#3377c4 50%,#1f62b3 51%,#2b6ec0);border:1px solid #0f3a70;box-shadow:inset 0 0 0 1px rgba(255,255,255,.25)"></div>
<div class="a" style="left:479px;top:732px;width:32px;height:32px;background:#f39a1e"></div>
<div class="a" style="left:485px;top:734px;font-size:22px;font-weight:bold;color:#fff">G</div>
<div class="a" style="left:488px;top:754px;font-size:7px;color:#fff">PDF</div>
<div class="a tk" style="left:516px"><span style="font-size:11.8px">与孩子一起学编</span>...</div>
<div class="a" style="left:632px;top:729px;width:158px;height:39px;border-radius:3px;background:linear-gradient(#4d8bd0,#3377c4 50%,#1f62b3 51%,#2b6ec0);border:1px solid #0f3a70;box-shadow:inset 0 0 0 1px rgba(255,255,255,.25)"></div>
<svg class="a" style="left:640px;top:732px" width="32" height="32" viewBox="0 0 32 32">
 <rect x="1" y="1" width="15" height="15" fill="#6aaee8"/><rect x="16" y="1" width="15" height="15" fill="#8fc88f"/>
 <rect x="1" y="16" width="15" height="15" fill="#f4d59a"/><rect x="16" y="16" width="15" height="15" fill="#d8d8d8"/>
 <path d="M4 3 L15 17" stroke="#e0524a" stroke-width="3"/><circle cx="15" cy="17" r="3" fill="#e8392a"/>
 <path d="M18 17 V30 L21 27 L24 32 L26 31 L23 26 H27 Z" fill="#fff" stroke="#111" stroke-width="1"/>
</svg>
<div class="a tk" style="left:677px">Pointofix</div>
<!-- tray -->
<svg class="a" style="left:1230px;top:740px" width="18" height="18"><circle cx="9" cy="9" r="7.5" fill="#1b1b1b" stroke="#e6eefa" stroke-width="1.5"/><circle cx="9" cy="9" r="4.5" fill="#f0522a"/></svg>
<svg class="a" style="left:1255px;top:740px" width="16" height="17" viewBox="0 0 16 17"><path d="M8 1 L15 3 V9 Q15 13 8 16 Q1 13 1 9 V3 Z" fill="none" stroke="#7fd3ff" stroke-width="2"/><path d="M4.5 7 L8 10 L11.5 7" fill="none" stroke="#7fd3ff" stroke-width="2"/></svg>
<svg class="a" style="left:1279px;top:741px" width="16" height="16" viewBox="0 0 16 16"><rect x="1" y="3" width="9" height="12" fill="none" stroke="#fff" stroke-width="1.5"/><rect x="3" y="1" width="8" height="3" fill="none" stroke="#fff" stroke-width="1.2"/><rect x="8" y="5" width="6" height="6" fill="#fff"/><path d="M9 2 V5 M13 2 V5 M11 11 V15" stroke="#fff" stroke-width="1.3"/></svg>
<svg class="a" style="left:1303px;top:743px" width="16" height="13"><g fill="#fff"><rect x="0" y="10" width="2.5" height="3"/><rect x="3.5" y="8" width="2.5" height="5"/><rect x="7" y="5.5" width="2.5" height="7.5"/><rect x="10.5" y="3" width="2.5" height="10"/><rect x="13.5" y="0.5" width="2.5" height="12.5"/></g></svg>
<svg class="a" style="left:1328px;top:741px" width="14" height="16"><path d="M0 5 H3 L8 1 V15 L3 11 H0 Z" fill="#fff"/><path d="M11 6 Q12.5 8 11 10" fill="none" stroke="#cfe0f5" stroke-width="1.2"/></svg>
<div class="a" style="left:1352px;top:729px;width:8px;height:39px;background:linear-gradient(90deg,#3a6fb0,#6b94c6);border-left:1px solid #0b2a55"></div>


</body></html>
